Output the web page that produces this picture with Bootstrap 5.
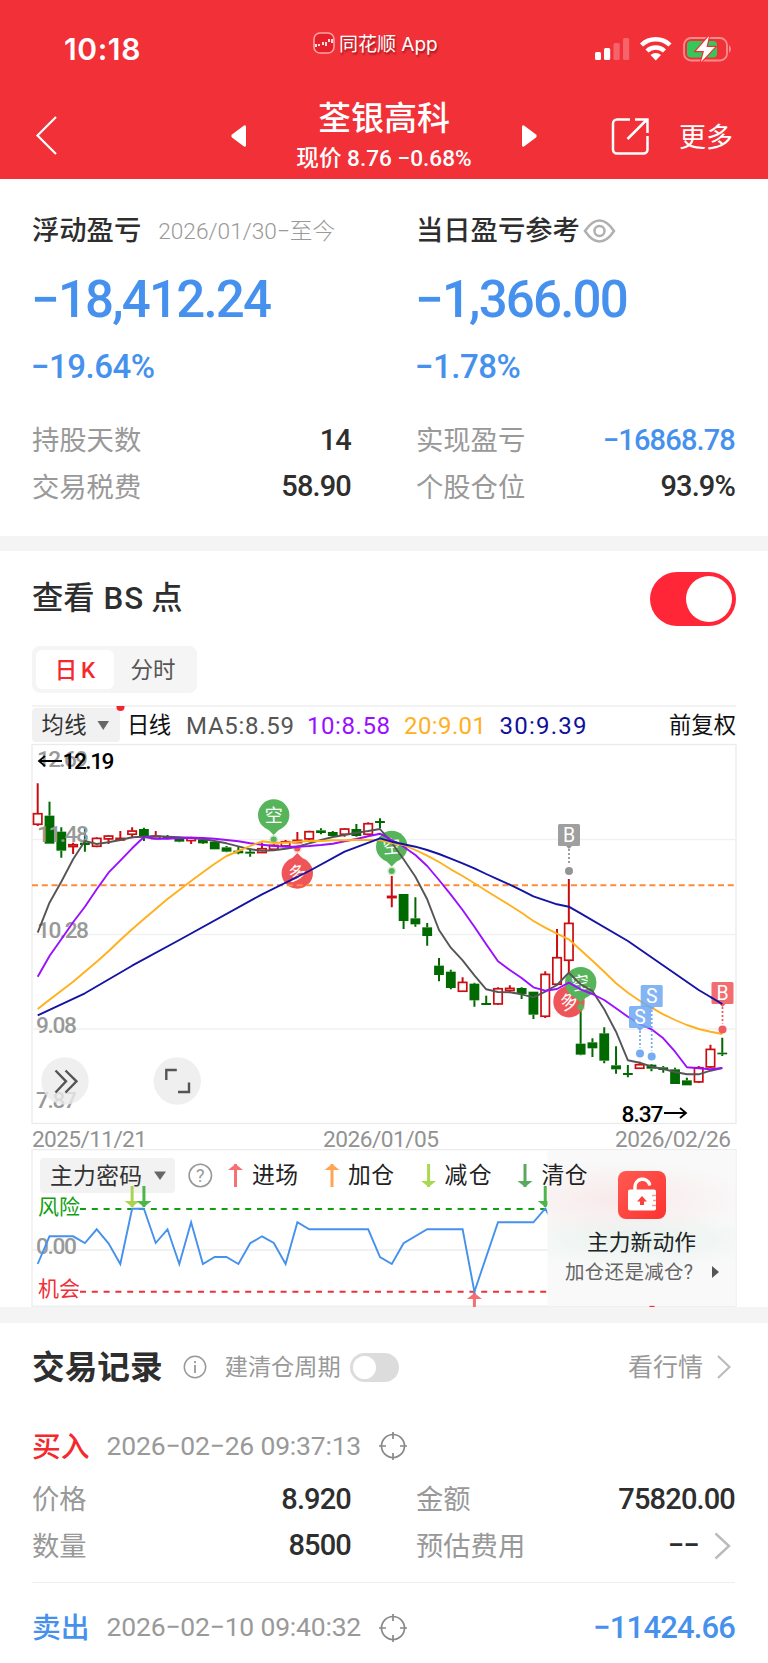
<!DOCTYPE html>
<html lang="zh-CN">
<head>
<meta charset="utf-8">
<meta name="viewport" content="width=device-width, initial-scale=1">
<title>荃银高科</title>
<link href="https://cdn.jsdelivr.net/npm/bootstrap@5.3.0/dist/css/bootstrap.min.css" rel="stylesheet">
<style>
body{font-family:Roboto,"Noto Sans CJK SC",sans-serif;color:#2e2e2e;background:#fff;line-height:1;overflow-x:hidden}
.page{width:768px;height:1663px;overflow:hidden}
svg{display:block;flex:none}
.hero{background:#f23038;height:179px}
.status{height:92px;font-family:Inter,"Noto Sans CJK SC",sans-serif}
.clock{font-size:30px;font-weight:600;width:249px;letter-spacing:.6px;padding:34px 0 0 64px}
.app-tag{font-size:19px;text-shadow:1px 2px 2px rgba(90,0,0,.55);width:282px;margin-left:64px}
.title-bar{height:87px}
.stock{font-size:33px;font-weight:500}
.quote{font-size:22.6px;font-weight:500;margin-top:13px}
.dim{color:#999}
.blue{color:#4691ee}
.up{color:#f5282d}
.pair{display:grid;grid-template-columns:319px 319px;column-gap:65px;padding-left:32px}
.cap{font-size:27.3px;font-weight:500}
.big{font-size:51px;font-weight:500;letter-spacing:-1.8px;padding-top:7px;margin-left:-1px}
.pct{font-size:33px;font-weight:500;letter-spacing:-.5px;padding-top:6px;margin-left:-1px}
.kv{font-size:27.3px;height:46.5px}
.kv .dim{padding-top:3px}
.num{font-size:29px;font-weight:500;letter-spacing:-.85px}
.rule-band{height:15px;background:#f4f4f4}
.h-title{font-size:31.3px;font-weight:500}
.h-title span{margin:0 7px 0 9px;letter-spacing:.9px}
.toggle-on{width:86px;height:54px;border-radius:27px;background:#ff2638;padding:4px}
.toggle-on i{width:46px;height:46px;border-radius:50%;background:#fff}
.seg{width:165px;height:47px;background:#f5f5f5;border-radius:8px;padding:4px}
.seg span{width:78px;height:39px;border-radius:6px;font-size:22.5px;padding-top:1px}
.toggle-off{width:49px;height:29px;border-radius:15px;background:#dcdcdc;padding:3px}
.toggle-off i{width:23px;height:23px;border-radius:50%;background:#fff}
.stamp{font-size:26.5px;letter-spacing:-.2px;margin-left:17px}
.side{font-size:28.8px;font-weight:500;padding-top:2px}
</style>
</head>
<body>
<div class="page">
  <header class="hero text-white">
    <div class="status d-flex">
      <div class="clock">10:18</div>
      <div class="app-tag d-flex gap-1">
        <svg width="22" height="22" style="margin-top:32px"><rect x="1" y="1" width="20" height="20" rx="6" fill="#e5202a" stroke="#ffa0a2" stroke-width="1.6"/><path d="M3 15v-3M6 14v-2M10 13v-3M13 14v-4M16 10v-3M19 11V7" stroke="#fff" stroke-width="1.7"/></svg>
        <span style="padding-top:35px">同花顺 App</span>
      </div>
      <svg width="173" height="92" viewBox="595 0 173 92">
        <g fill="#fff"><rect x="595" y="52" width="6" height="8" rx="1.5"/><rect x="604" y="48" width="6.2" height="12" rx="1.5"/><g opacity=".25"><rect x="613.5" y="43" width="6.2" height="17" rx="1.5"/><rect x="623" y="38" width="6.2" height="22" rx="1.5"/></g></g>
        <g fill="none" stroke="#fff" stroke-width="4.4"><path d="M641.5 45a20.5 20.5 0 0 1 28.500 0"/><path d="M647 51a12.500 12.500 0 0 1 17.500 0"/></g><path d="M650.500 55a8 8 0 0 1 10.500 0l-5.250 5.500z" fill="#fff"/>
        <rect x="684" y="38" width="43" height="22.500" rx="7" fill="none" stroke="#f98d90" stroke-width="1.8"/><rect x="687" y="41" width="30" height="16.500" rx="4" fill="#34c759"/><path d="M729 45q4 4 0 8z" fill="#f98d90"/>
        <path d="M709 36l-13 15h8l-3 11 14-15h-8.500z" fill="#fff" stroke="#f23038" stroke-width="2.400" paint-order="stroke"/>
      </svg>
    </div>
    <div class="title-bar d-flex">
      <svg width="290" height="87" viewBox="0 92 290 87"><path d="M56 117L37.500 135.500L56 154" fill="none" stroke="#fff" stroke-width="2.200"/><path d="M246 126.500v19a1.500 1.500 0 0 1-2 1l-12-9q-1.500-1.500 0-3l12-9a1.500 1.500 0 0 1 2 1z" fill="#fff"/></svg>
      <div class="text-center text-nowrap" style="width:188px;padding-top:10px">
        <div class="stock">荃银高科</div>
        <div class="quote">现价 8.76 −0.68%</div>
      </div>
      <svg width="201" height="87" viewBox="478 92 201 87"><path d="M522 126.500v19a1.500 1.500 0 0 0 2 1l12-9q1.500-1.500 0-3l-12-9a1.500 1.500 0 0 0-2 1z" fill="#fff"/><g fill="none" stroke="#fff" stroke-width="2.500"><path d="M630 119.500h-13a4 4 0 0 0-4 4v26a4 4 0 0 0 4 4h26.500a4 4 0 0 0 4-4V136M627.500 139L647 119.500M635 119.500h12.500V133"/></g></svg>
      <span style="font-size:27px;padding-top:33px">更多</span>
    </div>
  </header>

  <section style="height:357px;padding-top:36px">
    <div class="pair" style="height:52px">
      <div class="d-flex align-items-center" style="height:34px"><span class="cap">浮动盈亏</span><span class="dim fw-light text-nowrap" style="font-size:22.700px;margin-left:17px">2026/01/30−至今</span></div>
      <div class="d-flex align-items-center" style="height:34px"><span class="cap">当日盈亏参考</span>
        <svg width="33" height="26" viewBox="0 0 33 26" fill="none" stroke="#b0b0b0" stroke-width="2.500" style="margin:-3px 0 0 3px"><path d="M2 13Q9 2.500 16.500 2.500T31 13Q24 23.500 16.500 23.500T2 13z"/><circle cx="16.500" cy="13" r="5"/></svg></div>
    </div>
    <div class="pair blue" style="height:77px"><div class="big">−18,412.24</div><div class="big">−1,366.00</div></div>
    <div class="pair blue" style="height:73px"><div class="pct">−19.64%</div><div class="pct">−1.78%</div></div>
    <div class="pair">
      <div class="kv d-flex justify-content-between align-items-center"><span class="dim">持股天数</span><span class="num">14</span></div>
      <div class="kv d-flex justify-content-between align-items-center"><span class="dim">实现盈亏</span><span class="num blue">−16868.78</span></div>
      <div class="kv d-flex justify-content-between align-items-center"><span class="dim">交易税费</span><span class="num">58.90</span></div>
      <div class="kv d-flex justify-content-between align-items-center"><span class="dim">个股仓位</span><span class="num">93.9%</span></div>
    </div>
  </section>
  <div class="rule-band"></div>

  <section style="height:756px">
    <div class="d-flex align-items-center justify-content-between" style="padding:21px 32px 0;height:75px">
      <span class="h-title">查看<span>BS</span>点</span>
      <span class="toggle-on d-flex justify-content-end"><i></i></span>
    </div>
    <div style="padding:20px 32px 0;height:79px">
      <div class="seg d-flex"><span class="bg-white up fw-medium d-flex align-items-center justify-content-center" style="word-spacing:-2px">日 K</span><span class="d-flex align-items-center justify-content-center" style="color:#555">分时</span></div>
    </div>
    <svg id="chart" width="768" height="602" viewBox="0 705 768 602" font-family='Roboto,"Noto Sans CJK SC",sans-serif'>
      <defs>
        <radialGradient id="pk"><stop offset="0" stop-color="#f9dfe0" stop-opacity=".6"/><stop offset="1" stop-color="#f9dfe0" stop-opacity="0"/></radialGradient>
        <radialGradient id="gn"><stop offset="0" stop-color="#dceee8" stop-opacity=".6"/><stop offset="1" stop-color="#dceee8" stop-opacity="0"/></radialGradient>
        <linearGradient id="lk" x2="1" y2="1"><stop offset="0" stop-color="#ff5a52"/><stop offset="1" stop-color="#fc3330"/></linearGradient>
        <clipPath id="ind"><rect x="32" y="1150" width="516" height="157"/></clipPath>
        <clipPath id="dotclip"><rect x="110" y="706" width="20" height="10"/></clipPath>
        <clipPath id="panel"><rect x="547.500" y="1150.500" width="188" height="155.500"/></clipPath>
      </defs>
      <path d="M32 706h704" stroke="#efefef" stroke-width="1.500"/>
      <rect x="32" y="708" width="88" height="34" rx="4" fill="#f1f1f1"/>
      <circle cx="120.500" cy="707" r="4" fill="#f5232f" clip-path="url(#dotclip)"/>
      <path d="M97.500 721h11.500l-5.750 9z" fill="#666"/>
      <g font-size="22.300">
        <text x="41.500" y="733" fill="#333" textLength="45">均线</text>
        <text x="127" y="733" fill="#111" textLength="44">日线</text>
        <text x="669" y="733" fill="#111" textLength="67">前复权</text>
      </g>
      <g font-size="24">
        <text x="186" y="733.500" fill="#555" textLength="108">MA5:8.59</text>
        <text x="307" y="733.500" fill="#9a0fff" textLength="83">10:8.58</text>
        <text x="404" y="733.500" fill="#ffb020" textLength="82">20:9.01</text>
        <text x="499.500" y="733.500" fill="#10109c" textLength="87">30:9.39</text>
      </g>
      <g stroke="#ebebeb" fill="none"><rect x="32" y="744.500" width="704" height="379" stroke-width="1.300"/><path d="M32 839.500h704M32 934.500h704M32 1029h704" stroke="#f1f1f1" stroke-width="1.300"/><rect x="32" y="1149.700" width="704" height="156.500" stroke-width="1.200"/></g>
      <g id="candles"></g>
      <g font-size="22.700" font-weight="500" fill="#999">
        <text x="37" y="767" textLength="51">12.69</text><text x="37" y="841.500" textLength="52">11.48</text><text x="37" y="937.500" textLength="52">10.28</text><text x="36" y="1032.500" textLength="41">9.08</text><text x="36" y="1108" textLength="41">7.87</text>
      </g>
      <g id="pins"></g>
      <path d="M32 885.300h704" stroke="#ff8a38" stroke-width="2" stroke-dasharray="6 3.800"/>
      <g id="avgs" fill="none" stroke-width="1.900" stroke-linejoin="round"></g>
      <g id="flags"></g>
      <g font-size="22.700" font-weight="500" fill="#000"><text x="62.500" y="769" textLength="52">12.19</text><text x="621.500" y="1121.500" textLength="42">8.37</text></g>
      <g stroke="#000" stroke-width="1.800" fill="none"><path d="M62 761H39M45 756l-6 5 6 5M664 1113h21M680 1108l6 5-6 5"/></g>
      <g fill="#ebebeb" fill-opacity=".8"><circle cx="65" cy="1081" r="23.700"/><circle cx="177.300" cy="1081" r="23.700"/></g>
      <g stroke="#555" stroke-width="2.400" fill="none"><path d="M55.500 1070.500L66 1081.300L55.500 1092.500M65.500 1070.500L76.500 1081.300L65.500 1092.500M166.300 1080v-10h10.500M189 1082.500v9.500h-11"/></g>
      <g font-size="22.700" fill="#929292"><text x="32" y="1147" textLength="115">2025/11/21</text><text x="323" y="1147" textLength="116">2026/01/05</text><text x="615" y="1147" textLength="116">2026/02/26</text></g>

      <rect x="40" y="1158" width="135" height="35" rx="4" fill="#f2f2f2"/>
      <path d="M154 1171.500h12l-6 8.500z" fill="#666"/>
      <circle cx="200.300" cy="1175.500" r="11.200" fill="none" stroke="#999" stroke-width="1.600"/><text x="200.300" y="1182" font-size="18" fill="#999" text-anchor="middle">?</text>
      <path d="M32 1250h516" stroke="#ececec" stroke-width="1.300"/>
      <path d="M80 1209h468" stroke="#12a012" stroke-width="1.900" stroke-dasharray="6 5.800"/><path d="M80 1291.700h468" stroke="#f03038" stroke-width="1.900" stroke-dasharray="6 5.800"/>
      <g font-size="21"><text x="38" y="1213.500" fill="#12a012" textLength="42">风险</text><text x="38" y="1296.300" fill="#f03038" textLength="42">机会</text></g>
      <text x="36" y="1253.500" font-size="22.700" font-weight="500" fill="#999" textLength="41">0.00</text>
      <g id="osc" clip-path="url(#ind)"></g>
      <rect x="547.500" y="1150.500" width="188" height="155.500" fill="#f9f9f9"/>
      <ellipse cx="620" cy="1200" rx="130" ry="40" fill="url(#pk)" clip-path="url(#panel)"/>
      <ellipse cx="640" cy="1240" rx="140" ry="28" fill="url(#gn)" clip-path="url(#panel)"/>
      <rect x="618" y="1171" width="48" height="48" rx="8" fill="url(#lk)"/>
      <path d="M635 1190v-3.500a7.500 7.500 0 0 1 14.500-2.500" fill="none" stroke="#fff" stroke-width="3.500" stroke-linecap="round"/><rect x="628" y="1189.500" width="28" height="21" rx="2" fill="#fff"/><path d="M642 1196l5 5.500h-3v3.500h-4v-3.500h-3z" fill="#fb413c"/><path d="M652 1195.500h4M653 1200.500h3M652 1205.500h4" stroke="#fb9a98" stroke-width="1.500"/>
      <text x="587" y="1250" font-size="21.800" fill="#222" textLength="109">主力新动作</text>
      <text x="565" y="1278.700" font-size="19.500" fill="#666" textLength="128">加仓还是减仓?</text><path d="M712 1266l7 6-7 6z" fill="#555"/>
      <path d="M649.500 1306.500h5" stroke="#f03038" stroke-width="1.300"/>
      <g font-size="22.800" fill="#222"><text x="50" y="1184" fill="#333" textLength="92">主力密码</text><text x="252" y="1182.700" textLength="46">进场</text><text x="348" y="1182.700" textLength="46">加仓</text><text x="444.500" y="1182.700" textLength="47">减仓</text><text x="541.500" y="1182.700" textLength="46">清仓</text></g>
      <g id="legend"></g>
    </svg>
  </section>
  <div class="rule-band" style="height:16px"></div>

  <section style="padding:0 33px 0 32px">
    <div class="d-flex align-items-center" style="height:88px">
      <span class="fw-bold" style="font-size:32.700px;padding-top:2px">交易记录</span>
      <svg width="24" height="24" viewBox="0 0 24 24" fill="none" stroke="#999" stroke-width="1.500" style="margin-left:20px"><circle cx="12" cy="12" r="10.700"/><path d="M12 10v8M12 6v2.200" stroke-width="1.800"/></svg>
      <span class="dim" style="font-size:23.200px;margin-left:18px;padding-top:1px">建清仓周期</span>
      <span class="toggle-off" style="margin-left:9px"><i class="d-block"></i></span>
      <span class="dim ms-auto" style="font-size:25px;padding-top:1px">看行情</span>
      <svg width="14" height="24" viewBox="0 0 14 24" fill="none" stroke="#bbb" stroke-width="2.200" style="margin:0 4px 0 14px"><path d="M1 1l11.500 11L1 23"/></svg>
    </div>
    <div class="d-flex align-items-center" style="height:70px;margin-bottom:-5px">
      <span class="up side">买入</span>
      <span class="dim stamp">2026−02−26 09:37:13</span>
      <svg width="30" height="30" viewBox="0 0 30 30" fill="none" stroke="#888" stroke-width="1.700" style="margin-left:17px"><circle cx="15" cy="15" r="11.500"/><path d="M15 1v7M15 22v7M1 15h7M22 15h7"/></svg>
    </div>
    <div class="pair ps-0">
      <div class="kv d-flex justify-content-between align-items-center"><span class="dim">价格</span><span class="num">8.920</span></div>
      <div class="kv d-flex justify-content-between align-items-center"><span class="dim">金额</span><span class="num">75820.00</span></div>
      <div class="kv d-flex justify-content-between align-items-center"><span class="dim">数量</span><span class="num">8500</span></div>
      <div class="kv d-flex align-items-center"><span class="dim me-auto">预估费用</span><span class="num">−−</span><svg width="17" height="28" viewBox="0 0 17 28" fill="none" stroke="#bbb" stroke-width="2.400" style="margin:0 4px 0 15px"><path d="M1.500 1.500L15 14L1.500 26.500"/></svg></div>
    </div>
    <div style="height:14px;border-bottom:1px solid #eee"></div>
    <div class="d-flex align-items-center" style="height:89px">
      <span class="blue side">卖出</span>
      <span class="dim stamp">2026−02−10 09:40:32</span>
      <svg width="30" height="30" viewBox="0 0 30 30" fill="none" stroke="#888" stroke-width="1.700" style="margin-left:17px"><circle cx="15" cy="15" r="11.500"/><path d="M15 1v7M15 22v7M1 15h7M22 15h7"/></svg>
      <span class="blue ms-auto num" style="font-size:31px">−11424.66</span>
    </div>
  </section>
</div>
<script src="https://cdn.jsdelivr.net/npm/bootstrap@5.3.0/dist/js/bootstrap.bundle.min.js"></script>
<script>
const X = i => 37.7 + i * 11.803, Y = v => 740 + v / 3;
const put = (id, s) => document.getElementById(id).innerHTML = s;
// [rising, high, body top, body bottom, low], in thirds of a pixel below the chart top
const days = [[1,130,220,253,258],[0,185,227,311,311],[0,262,275,332,353],[1,308,313,320,342],[0,262,308,315,335],[1,292,294,319,322],[1,285,287,297,312],[1,273,294,300,300],[1,262,272,283,295],[0,263,267,291,303],[1,273,288,296,296],[0,285,288,294,298],[0,290,293,305,307],[1,290,292,302,312],[0,297,298,310,312],[0,305,305,328,328],[0,318,322,335,337],[0,320,332,340,343],[0,325,335,341,350],[1,308,325,338,338],[1,313,315,328,330],[1,300,304,318,318],[1,276,300,308,308],[1,272,274,297,300],[0,265,271,279,283],[0,273,276,288,290],[1,264,266,283,290],[0,252,267,288,290],[1,247,250,283,286],[0,235,243,249,265],[1,408,468,473,502],[0,462,462,543,567],[0,472,535,553,560],[0,549,562,588,617],[0,654,677,705,724],[0,689,695,744,748],[1,712,726,754,756],[0,728,731,781,800],[0,767,789,795,795],[1,742,745,792,795],[1,736,744,752,758],[0,742,744,762,777],[0,755,755,824,837],[1,694,702,829,834],[1,567,652,733,734],[1,417,549,661,700],[0,810,911,944,946],[0,895,907,925,951],[0,862,880,962,970],[0,919,976,988,1001],[0,975,999,1005,1012],[1,965,973,985,987],[0,972,974,986,994],[0,978,982,990,998],[0,983,988,1032,1032],[0,1013,1021,1036,1036],[1,978,982,1026,1029],[1,914,927,981,984],[0,893,938,943,948]];
put('candles', days.map(([r,h,t,b,l], i) => {
  const x = X(i), c = r ? '#cc0c10' : '#006a00';
  return `<path d="M${x} ${Y(h)}V${Y(t)}M${x} ${Y(b)}V${Y(l)}" stroke="${c}" stroke-width="2"/>` +
    (r ? `<rect x="${x-4.2}" y="${Y(t)+.4}" width="8.400" height="${Math.max(1,(b-t)/3-.5)}" fill="#fff" stroke="${c}" stroke-width="1.700"/>`
       : `<rect x="${x-4.9}" y="${Y(t)}" width="9.800" height="${(b-t)/3}" fill="${c}"/>`);
}).join(''));
const run = (from, list) => list.map((v, k) => [from + k, v]);
const path = pts => 'M' + pts.map(([i, v]) => X(i).toFixed(1) + ' ' + Y(v).toFixed(1)).join('L');
const ma5 = run(0,[578,488,425,358,303,312,307,300,292,290,288,290,292,294,297,303,310,319,328,332,331,326,320,310,300,291,285,278,273,267,308,358,410,478,570,623,661,706,748,756,757,763,772,755,735,698,733,753,808,875,961,968,980,987,996,1003,1003,992,984]);
const ma10 = run(0,[710,648,598,547,500,448,398,362,325,291,296,296,294,293,294,296,300,304,310,314,318,320,320,318,315,311,304,297,289,281,300,320,345,378,420,464,510,560,613,664,690,714,742,752,747,728,748,762,780,805,830,852,868,895,935,982,985,988,984]);
const ma20 = run(0,[807,779,752,725,695,665,634,600,568,537,507,477,450,423,397,371,348,333,318,304,308,308,305,303,303,301,301,300,300,300,309,315,330,347,366,388,408,430,452,474,496,518,543,563,581,598,630,662,695,730,758,782,803,823,840,855,867,875,882]);
const ma30 = [[0,826],[4,760],[8,677],[12,600],[19,463],[23,393],[26,335]].concat(run(29,[295,305,313,320,330,342,356,370,385,402,418,434,451,469,481,493,500,520]), [[50,603],[56,750],[58,792]]);
put('avgs', [[ma5,'#555'],[ma10,'#9a0fff'],[ma20,'#ffb01c'],[ma30,'#1414a4']].map(([p,c]) => `<path d="${path(p)}" stroke="${c}"/>`).join(''));
// round signal pins: x, y, glyph, colour, direction of the tip, glyph rotation, dot y
put('pins', [[273.7,815,'空','#56b45a',1,0,839.5],[297.3,873,'多','#ef5558',-1,-12,848.500],[391.7,846.5,'空','#56b45a',1,-5,871],[569,1001.7,'多','#ef5558',-1,-20,980],[580.7,982.7,'空','#56b45a',1,-12,1007]].map(([x,y,t,c,d,a,k]) =>
  `<g fill="${c}"><circle cx="${x}" cy="${y}" r="15.700"/><path d="M${x-7} ${y+d*13}L${x} ${y+d*20}L${x+7} ${y+d*13}z"/><circle cx="${x}" cy="${k}" r="3"/><circle cx="${x}" cy="${k}" r="4.500" opacity=".25"/></g><text x="${x}" y="${y+6.5}" font-size="18" fill="#fff" text-anchor="middle" transform="rotate(${a} ${x} ${y})">${t}</text>`).join(''));
put('flags', [[569,824,'B','#8f8f8f',871],[640,1006,'S','#6fa8f2',1053.5],[651.7,985,'S','#6fa8f2',1056.5],[722.5,982,'B','#ef5558',1029.5]].map(([x,y,t,c,k]) =>
  `<g fill="${c}" opacity=".95"><rect x="${x-11}" y="${y}" width="22" height="22" rx="1.500" opacity=".9"/><path d="M${x-3} ${y+22}h6l-3 3z"/><path d="M${x} ${y+25}V${k-6}" stroke="${c}" stroke-width="1.800" stroke-dasharray="2 2"/><circle cx="${x}" cy="${k}" r="4"/></g><text x="${x}" y="${y+18}" font-size="19.500" fill="#fff" text-anchor="middle">${t}</text>`).join('') +
  `<path d="${path([[57,771],[58,792]])}" stroke="#1414a4" stroke-width="1.900"/>`);
const arrow = (x, y, d, c, h, w) => `<path d="M${x} ${y}V${y-d*h}" stroke="${c}" stroke-width="3"/><path d="M${x-w} ${y-d*6}L${x} ${y}L${x+w} ${y-d*6}z" fill="${c}"/>`;
const osc = [[0,372],[1,289],[3,289],[4,309],[5,268],[6,310],[7,372],[8,206],[9,206],[10,309],[11,268],[12,372],[13,247],[14,372],[15,351],[16,351],[17,372],[18,310],[19,289],[20,309],[21,372],[22,247],[23,268],[28,268],[29,351],[30,372],[31,310],[33,268],[36,268],[37,455],[39,247],[42,247],[43,206],[44,268]];
put('osc', arrow(X(8),1207,1,'#aad450',21,7.5) + arrow(X(9),1207,1,'#4cb648',21,7.5) + arrow(X(43),1207,1,'#4cb648',21,7.5) + arrow(X(37),1293,-1,'#f47070',14,7.5) +
  `<path d="${path(osc.map(([i,v]) => [i, v+1200]))}" fill="none" stroke="#4691ee" stroke-width="1.900"/>`);
put('legend', arrow(235.5,1164,-1,'#f87074',23,7.5) + arrow(332,1164,-1,'#ffa552',23,7.5) + arrow(428.6,1187,1,'#aad850',23,7.5) + arrow(525,1187,1,'#5aa860',23,7.5));
</script>
</body>
</html>
